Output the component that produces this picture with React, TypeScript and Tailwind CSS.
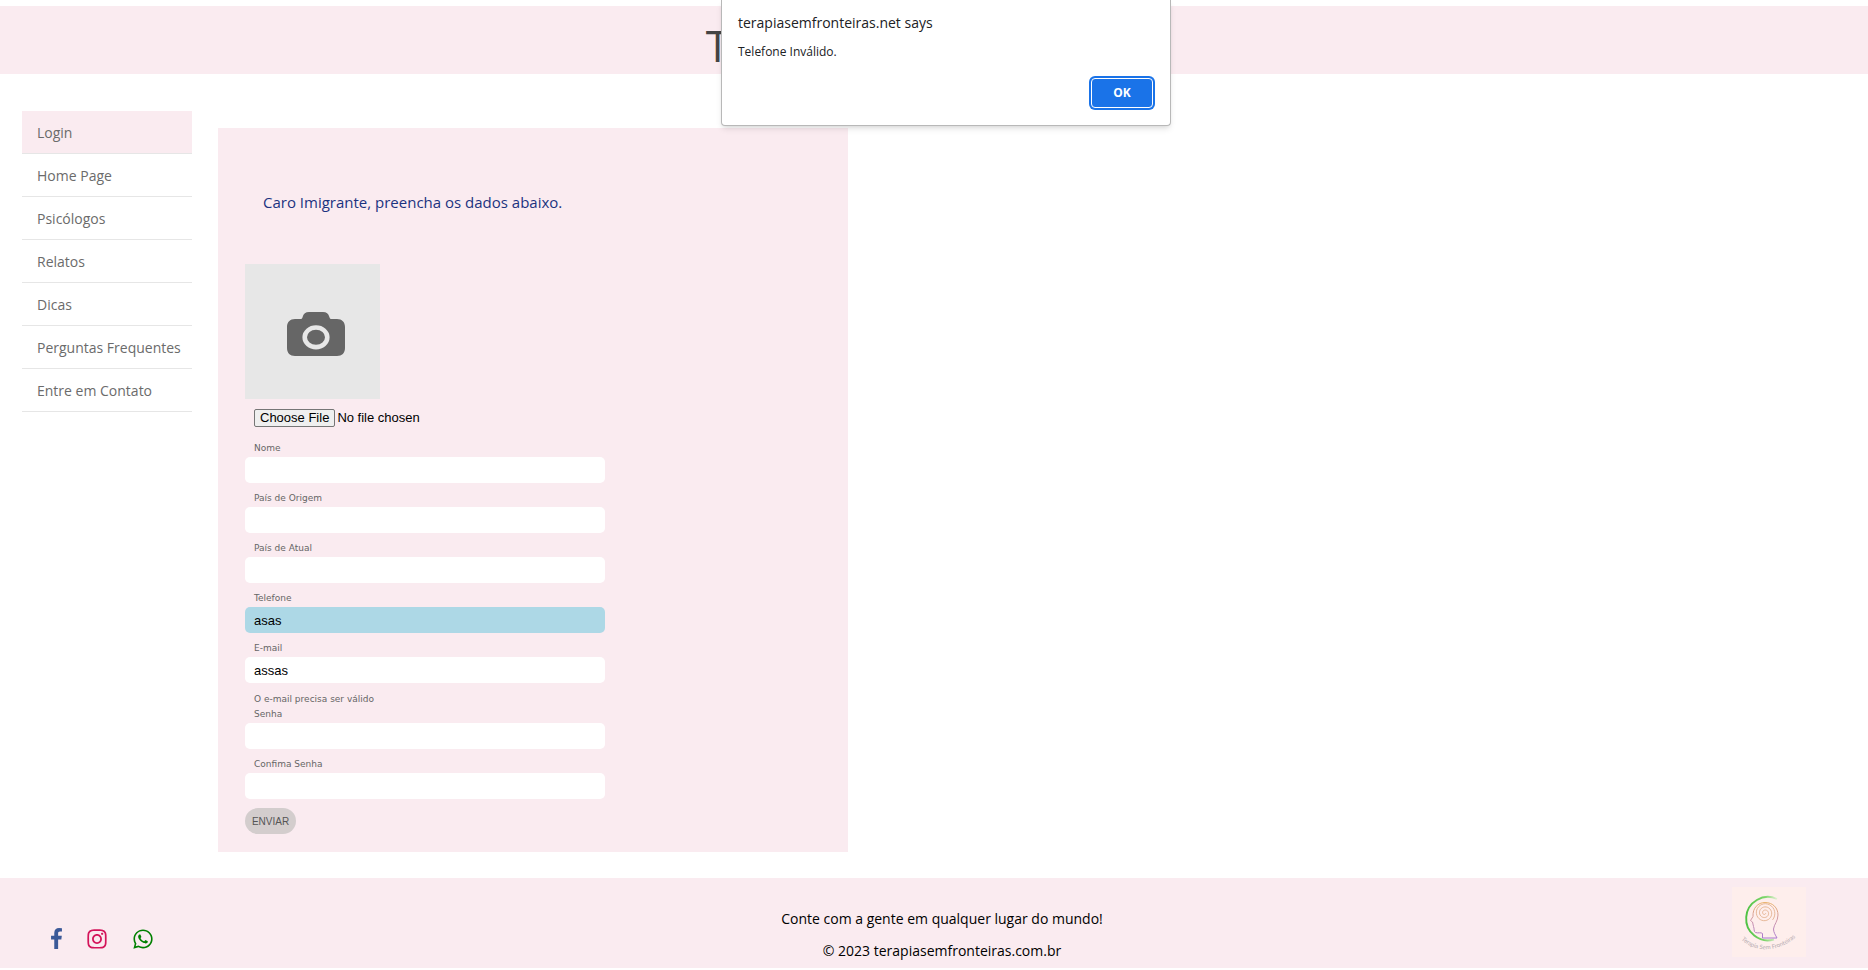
import { FaInstagram, FaWhatsapp } from 'react-icons/fa';

const navItems = [
  'Login',
  'Home Page',
  'Psicólogos',
  'Relatos',
  'Dicas',
  'Perguntas Frequentes',
  'Entre em Contato',
];

type FieldProps = {
  id: string;
  label: string;
  type?: string;
  value?: string;
  error?: string;
  invalid?: boolean;
};

function Field({ id, label, type = 'text', value = '', error, invalid }: FieldProps) {
  return (
    <div className="flex flex-col">
      <label htmlFor={id} className="h-4 pl-[9px] leading-[15px]">
        {label}
      </label>
      <input
        id={id}
        type={type}
        defaultValue={value}
        className={
          'mb-2 h-[26px] w-full rounded-[5px] px-[9px] font-[Liberation_Sans,sans-serif] text-[13px] text-black outline-none ' +
          (invalid ? 'bg-[#add8e6]' : 'bg-white')
        }
      />
      {error && <p className="h-4 pt-px pl-[9px] leading-[15px]">{error}</p>}
    </div>
  );
}

function CameraIcon() {
  return (
    <svg viewBox="0 0 58 44" className="mt-1 ml-1.5 h-11 w-[58px]" aria-hidden="true">
      <path
        fill="#666"
        d="M8 7h5.500c1.200 0 1.700-.6 2.100-2C16.600 1.600 18.500 0 22 0h14c3.500 0 5.400 1.600 6.400 5 .4 1.400.9 2 2.100 2H50c5 0 8 3 8 8v21c0 5-3 8-8 8H8c-5 0-8-3-8-8V15c0-5 3-8 8-8z"
      />
      <ellipse cx="29" cy="25.300" rx="11.300" ry="9.800" fill="none" stroke="#e7e7e7" strokeWidth="4.600" />
    </svg>
  );
}

function FacebookIcon() {
  return (
    <svg viewBox="479 0 864 1664" className="h-[21px] w-[11px]" fill="currentColor" aria-hidden="true">
      <path d="M1343 12v264h-157q-86 0-116 36t-30 108v189h293l-39 296h-254v759h-306v-759h-255v-296h255v-218q0-186 104-288.500t277-102.500q147 0 228 12z" />
    </svg>
  );
}

// Archimedean spiral that fills the skull of the logo.
const spiral = Array.from({ length: 90 }, (_, i) => {
  const t = i * 0.22;
  const r = 0.6 + t * 0.5;
  return `${(32.8 + r * Math.cos(t)).toFixed(2)} ${(26 + r * Math.sin(t)).toFixed(2)}`;
}).join('L');

function Logo() {
  return (
    <svg viewBox="0 0 74 70" className="h-[70px] w-[74px] bg-[#feeeec]" role="img" aria-label="Terapia Sem Fronteiras">
      <defs>
        <linearGradient id="ring" x1="0" x2="1" y1="0" y2="0">
          <stop offset="0" stopColor="#4fc244" />
          <stop offset="0.600" stopColor="#7cd56a" />
          <stop offset="1" stopColor="#e3efd3" />
        </linearGradient>
        <linearGradient id="head" x1="0" x2="0" y1="0" y2="1">
          <stop offset="0" stopColor="#e9b26b" />
          <stop offset="0.500" stopColor="#cf97a8" />
          <stop offset="1" stopColor="#a877d0" />
        </linearGradient>
        <path id="arc" d="M8 51C22 67 48 66 66 48" />
      </defs>
      <path d="M45 12A21.700 21.700 0 1 0 42 52.500" fill="none" stroke="url(#ring)" strokeWidth="1.900" />
      <path
        d="M45 51H30.500V46.500C29 45 26 46.500 23.500 45.500C21.500 44.500 22.500 41.500 21.500 39.500L20.500 35L18.500 33.500L21 29.500C20.500 21 26 15.500 33 15.500C41 15.500 46 21 46 28C46 34 42 37.500 41.500 42C41.500 45.500 43.500 48 45 51Z"
        fill="none"
        stroke="url(#head)"
        strokeWidth="1"
      />
      <path d={`M${spiral}`} fill="none" stroke="#dfa983" strokeWidth="0.800" />
      <text className="font-[Lato,sans-serif] text-[6px]" fill="#b5abb0">
        <textPath href="#arc" startOffset="2">
          Terapia Sem Fronteiras
        </textPath>
      </text>
    </svg>
  );
}

export default function App() {
  return (
    <div className="bg-white pt-1.5 font-[Open_Sans,Noto_Sans,sans-serif]">
      <header className="flex h-[68px] items-center justify-center bg-[#faebf0]">
        <h1 className="pt-2.5 pl-2 text-[43px] leading-none text-[#444]">Terapia Sem Fronteiras</h1>
      </header>

      <main className="flex items-start px-[22px]">
        <nav className="mt-[37px] w-[170px] shrink-0 text-sm text-[#6b6b6b]">
          <ul>
            {navItems.map((item, i) => (
              <li key={item}>
                <a
                  href="#"
                  className={
                    'flex h-[43px] items-center border-b border-[#e6e6e6] pt-0.5 pl-[15px] ' +
                    (i === 0 ? 'bg-[#faebf0]' : '')
                  }
                >
                  {item}
                </a>
              </li>
            ))}
          </ul>
        </nav>

        <section className="mt-[54px] ml-[26px] w-[630px] bg-[#faebf0] px-[27px] pt-[60px] pb-[18px]">
          <h2 className="pl-[18px] text-[15px] leading-7 text-[#1c3380]">Caro Imigrante, preencha os dados abaixo.</h2>
          <form className="mt-12 w-[360px] font-[DejaVu_Sans,sans-serif] text-[9px] text-[#666]">
            <div className="flex h-[135px] w-[135px] items-center justify-center bg-[#e7e7e7]">
              <CameraIcon />
            </div>
            <input
              type="file"
              aria-label="Foto"
              className="mt-[10px] mb-[14px] ml-[9px] block h-[18px] font-[Liberation_Sans,sans-serif] text-[13px] leading-4 text-black file:mr-0.5 file:h-[18px] file:rounded-[2px] file:border file:border-solid file:border-[#767676] file:bg-[#efefef] file:px-[5px] file:leading-4"
            />
            <Field id="nome" label="Nome" />
            <Field id="origem" label="País de Origem" />
            <Field id="atual" label="País de Atual" />
            <Field id="telefone" label="Telefone" value="asas" invalid />
            <Field id="email" label="E-mail" value="assas" error="O e-mail precisa ser válido" />
            <Field id="senha" label="Senha" type="password" />
            <Field id="confirma" label="Confima Senha" type="password" />
            <button
              type="button"
              className="mt-px block h-[26px] w-[51px] rounded-full bg-[#d3cdcd] text-center font-[Liberation_Sans,sans-serif] text-[10px] text-[#555]"
            >
              ENVIAR
            </button>
          </form>
        </section>
      </main>

      <footer className="mt-[26px] grid h-[90px] grid-cols-[1fr_auto_1fr] bg-[#faebf0]">
        <div className="flex items-center gap-6 pt-[31px] pl-[51px] text-[22px]">
          <a href="#" aria-label="Facebook" className="text-[#3b5998]">
            <FacebookIcon />
          </a>
          <a href="#" aria-label="Instagram" className="text-[#d4145a]">
            <FaInstagram />
          </a>
          <a href="#" aria-label="WhatsApp" className="text-[#008000]">
            <FaWhatsapp />
          </a>
        </div>
        <div className="pt-[25px] pl-4 text-center text-sm leading-8 text-black">
          <p>Conte com a gente em qualquer lugar do mundo!</p>
          <p>© 2023 terapiasemfronteiras.com.br</p>
        </div>
        <div className="flex justify-end pt-[9px] pr-[62px]">
          <Logo />
        </div>
      </footer>

      <div
        role="alertdialog"
        aria-labelledby="dialog-title"
        aria-describedby="dialog-text"
        className="absolute top-0 left-1/2 ml-3 w-[450px] -translate-x-1/2 rounded-b border border-t-0 border-[#b8b8b8] bg-white px-4 pt-3 pb-[15px] text-[#202124] shadow-md"
      >
        <p id="dialog-title" className="text-sm leading-[22px]">
          terapiasemfronteiras.net says
        </p>
        <p id="dialog-text" className="mt-[9px] text-xs leading-[18px]">
          Telefone Inválido.
        </p>
        <div className="mt-4 mb-px flex justify-end">
          <button
            type="button"
            className="m-px h-[30px] w-[62px] rounded border border-white bg-[#1a73e8] text-xs font-bold text-white ring-2 ring-[#1a73e8]"
          >
            OK
          </button>
        </div>
      </div>
    </div>
  );
}
